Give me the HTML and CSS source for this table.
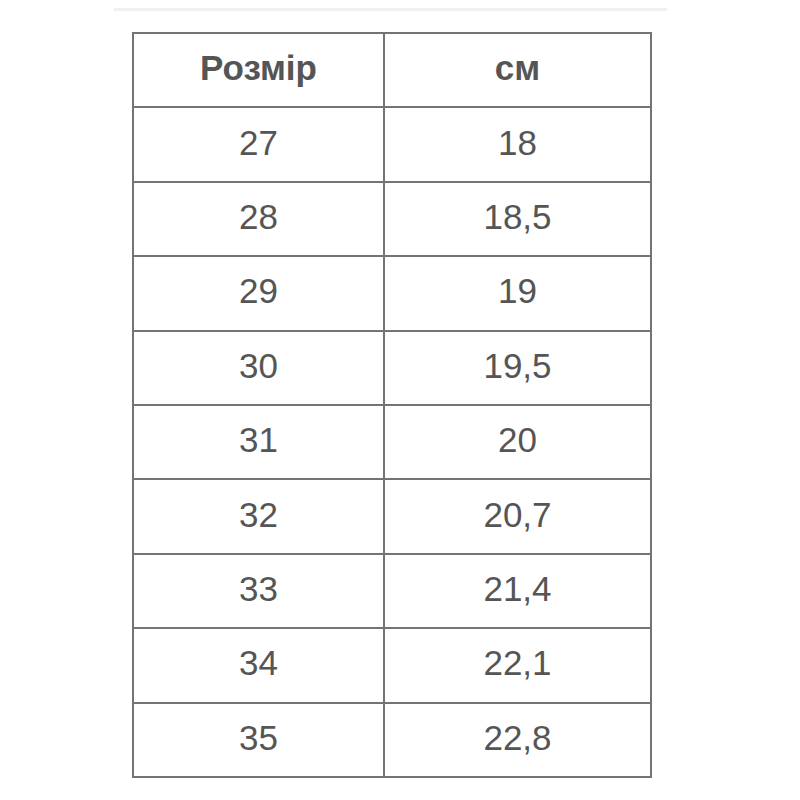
FILE: index.html
```html
<!DOCTYPE html>
<html lang="uk">
<head>
<meta charset="utf-8">
<link rel="stylesheet" href="styles.css">
</head>
<body>
<div class="rule"></div>
<div class="size-table">
  <div class="cell head">Розмір</div><div class="cell head">см</div>
  <div class="cell">27</div><div class="cell">18</div>
  <div class="cell">28</div><div class="cell">18,5</div>
  <div class="cell">29</div><div class="cell">19</div>
  <div class="cell">30</div><div class="cell">19,5</div>
  <div class="cell">31</div><div class="cell">20</div>
  <div class="cell">32</div><div class="cell">20,7</div>
  <div class="cell">33</div><div class="cell">21,4</div>
  <div class="cell">34</div><div class="cell">22,1</div>
  <div class="cell">35</div><div class="cell">22,8</div>
</div>
</body>
</html>
```
FILE: styles.css
```css
html, body {
  margin: 0;
  padding: 0;
  background: #ffffff;
}
body {
  font-family: "Liberation Sans", Arial, sans-serif;
  color: #555555;
}
.rule {
  margin: 8px 0 0 114px;
  width: 553px;
  height: 3px;
  background: #f0f0f0;
}
.size-table {
  margin: 21px 0 0 132px;
  width: 520px;
  box-sizing: border-box;
  display: grid;
  grid-template-columns: 249px 265px;
  grid-auto-rows: 72.4px;
  gap: 2px;
  padding: 2px;
  background: #747474;
}
.cell {
  background: #ffffff;
  display: flex;
  align-items: center;
  justify-content: center;
  font-size: 35px;
  padding-bottom: 4px;
  box-sizing: border-box;
}
.head {
  font-weight: bold;
}
```
